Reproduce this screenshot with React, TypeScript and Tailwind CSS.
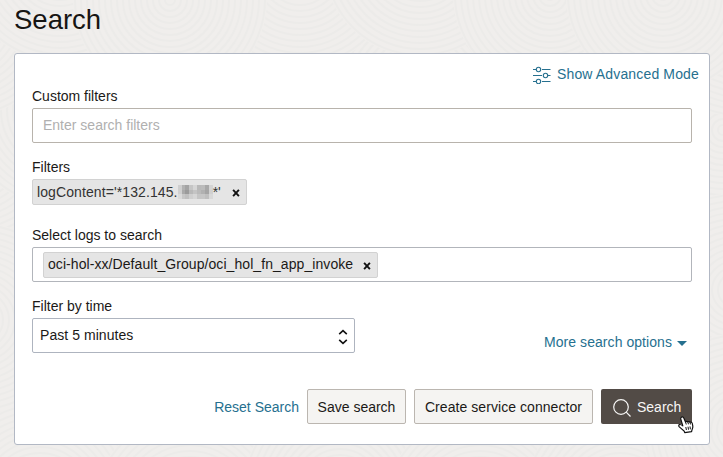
import React from "react";

const RINGS = Array.from({ length: 16 }, (_, i) => 5 + i * 6);
const CENTERS: [number, number][] = [
  [-30, 140], [60, 110], [300, 60], [420, 90], [723, 130], [-20, 320], [735, 290],
  [40, 500], [190, 510], [340, 490], [480, 510], [620, 500], [740, 430], [-35, 20],
  [60, -35], [300, -30], [420, -40], [740, 20], [170, 0], [550, -5], [663, -5],
];

function Backdrop() {
  return (
    <svg className="absolute inset-0 h-full w-full" viewBox="0 0 723 457" aria-hidden="true">
      {CENTERS.map(([x, y], n) => (
        <g key={n} fill="none" stroke="#ecebe9" strokeWidth="2">
          <circle cx={x} cy={y} r="97" fill="#f0eeec" stroke="none" />
          {RINGS.map((r) => (
            <circle key={r} cx={x} cy={y} r={r} />
          ))}
        </g>
      ))}
    </svg>
  );
}

function CloseMark() {
  return (
    <svg className="h-[8px] w-[8px]" viewBox="0 0 8 8" aria-hidden="true">
      <path d="M1.1 .8 6.9 7.2M6.9 .8 1.1 7.2" stroke="#111" strokeWidth="1.9" fill="none" />
    </svg>
  );
}

function SlidersIcon() {
  return (
    <svg className="h-[18px] w-[18px]" viewBox="0 0 18 18" fill="none" stroke="#26708f" strokeWidth="1.1" aria-hidden="true">
      <path d="M0 3.5H3M9 3.5H17.5M0 9.5H9M15 9.5H17.5M0 15.5H3M9 15.5H17.5" />
      <circle cx="5.5" cy="3.5" r="2.2" />
      <circle cx="12.5" cy="9.5" r="2.2" />
      <circle cx="5.5" cy="15.5" r="2.2" />
    </svg>
  );
}

const MASK = [
  "#cfcfcf", "#b2b2b2", "#a4a4a4", "#c6c6c6", "#d6d6d6", "#b9b9b9", "#bbbbbb", "#a8a8a8", "#d4d4d4",
  "#d0d0d0", "#aaaaaa", "#9b9b9b", "#b9b9b9", "#c4c4c4", "#bababa", "#b1b1b1", "#a5a5a5", "#d0d0d0",
  "#dadada", "#c7c7c7", "#c0c0c0", "#cfcfcf", "#d6d6d6", "#c5c5c5", "#c6c6c6", "#bfbfbf", "#d8d8d8",
];

function HandCursor() {
  return (
    <svg className="absolute left-[678px] top-[416px] h-[18px] w-[16px]" viewBox="0 0 16 18" aria-hidden="true">
      <path
        d="M3.4 1.2C4.3.6 5.4 1 5.8 2L7.5 5.9C8 5.1 9.3 5.1 9.8 5.9 10.4 5.3 11.6 5.4 12 6.3 12.9 5.8 14.1 6.4 14.3 7.5L14.8 10.2C15 11.8 14.3 13 13.9 14.2L13.6 15.6 6.7 16.6 6.2 15.1C4.8 14 3 12.6 1.3 10.9.5 10 .6 9 1.4 8.6 2.4 8.2 3.6 8.9 4.8 9.9L2.8 3.2C2.5 2.4 2.7 1.6 3.4 1.2Z"
        fill="#fff" stroke="#111" strokeWidth="1.2" strokeLinejoin="round"
      />
      <path d="M7.5 5.9 8.3 8.5M9.8 5.9 10.5 8.3M12 6.3 12.5 8.4M7.8 11 8.4 14M10 10.7 10.5 13.7M12 10.4 12.4 13.3" stroke="#111" strokeWidth="1" fill="none" />
    </svg>
  );
}

export default function App() {
  return (
    <div className="relative h-[457px] w-[723px] overflow-hidden bg-[#f0eeec] font-['Liberation_Sans',Arial,sans-serif] text-[14px] leading-5 text-[#1b1917]">
      <Backdrop />
      <main className="relative flex h-full flex-col pl-[14px]">
        <h1 className="h-[53px] pt-1 text-[27.5px] leading-8 text-[#161513]">Search</h1>
        <section className="flex h-[392px] w-[696px] flex-col rounded-[3px] border border-[#b2b8c4] bg-white px-[17px] pt-[10px]">
          <a className="-mr-[7px] flex h-[20px] items-center justify-end gap-[6px] tracking-[0.15px] text-[#26708f]">
            <span className="pt-[2px]"><SlidersIcon /></span>
            <span>Show Advanced Mode</span>
          </a>
          <label className="mt-[2px]">Custom filters</label>
          <input
            className="mt-[2px] h-[35px] w-full rounded-[2px] border border-[#b8b3ac] bg-white px-[10px] pb-[2px] placeholder:text-[#b0b0b0] placeholder:opacity-100"
            placeholder="Enter search filters"
          />
          <div className="mt-[14px]">Filters</div>
          <div className="mt-[2px] flex h-[26px] w-[215px] items-center rounded-[2px] border border-[#d2d2d2] bg-[#e5e5e5] pl-[4px] text-[#333]">
            <span className="tracking-[0.1px]">logContent='*132.145.</span>
            <span className="grid h-[14px] w-[35px] shrink-0 grid-cols-9">
              {MASK.map((c, i) => (
                <i key={i} style={{ backgroundColor: c }} />
              ))}
            </span>
            <span>*'</span>
            <span className="ml-auto mr-[6px] mt-[2px]"><CloseMark /></span>
          </div>
          <label className="mt-[20px]">Select logs to search</label>
          <div className="mt-[2px] flex h-[35px] items-center rounded-[2px] border border-[#b2b5bb] pl-[10px]">
            <div className="flex h-[26px] w-[335px] items-center rounded-[2px] border border-[#d2d2d2] bg-[#e5e5e5] pl-[4px]">
              <span className="pb-[2px] tracking-[0.07px]">oci-hol-xx/Default_Group/oci_hol_fn_app_invoke</span>
              <span className="ml-auto mr-[6px] mt-[2px]"><CloseMark /></span>
            </div>
          </div>
          <div className="flex justify-between">
            <div className="flex flex-col pt-[14px]">
              <label>Filter by time</label>
              <div className="mt-[2px] flex h-[35px] w-[323px] items-center justify-between rounded-[2px] border border-[#aeb4bf] pl-[7px] pr-[6px]">
                <span className="pb-[2px] tracking-[0.05px]">Past 5 minutes</span>
                <svg className="mt-[2px] h-[16px] w-[10px]" viewBox="0 0 10 16" fill="none" stroke="#111" strokeWidth="1.6" aria-hidden="true">
                  <path d="M1.2 5.2 5 1.7 8.8 5.2M1.2 10.8 5 14.3 8.8 10.8" />
                </svg>
              </div>
            </div>
            <a className="mr-[5px] mt-[50px] flex h-[20px] items-center gap-[5px] tracking-[0.06px] text-[#26708f]">
              <span>More search options</span>
              <svg className="mt-[2px] h-[5px] w-[10px]" viewBox="0 0 10 5" aria-hidden="true">
                <path d="M0 0H10L5 5Z" fill="#26708f" />
              </svg>
            </a>
          </div>
          <div className="mt-[36px] flex items-center justify-end">
            <a className="mr-[8px] text-[#26708f]">Reset Search</a>
            <button className="h-[35px] w-[99px] rounded-[2px] border border-[#bbb6b0] bg-[#f5f4f2]">Save search</button>
            <button className="ml-[8px] h-[35px] w-[179px] rounded-[2px] border border-[#bbb6b0] bg-[#f5f4f2] tracking-[0.06px]">Create service connector</button>
            <button className="ml-[8px] flex h-[35px] w-[91px] items-center rounded-[2px] bg-[#524b46] pl-[12px] text-[#f7f6f5]">
              <svg className="mr-[6px] mt-[2px] h-[18px] w-[18px]" viewBox="0 0 18 18" fill="none" stroke="#f7f6f5" strokeWidth="1.2" aria-hidden="true">
                <circle cx="8" cy="8" r="7.3" />
                <path d="M13.2 13.2 17.5 17.5" />
              </svg>
              Search
            </button>
          </div>
        </section>
      </main>
      <HandCursor />
    </div>
  );
}
